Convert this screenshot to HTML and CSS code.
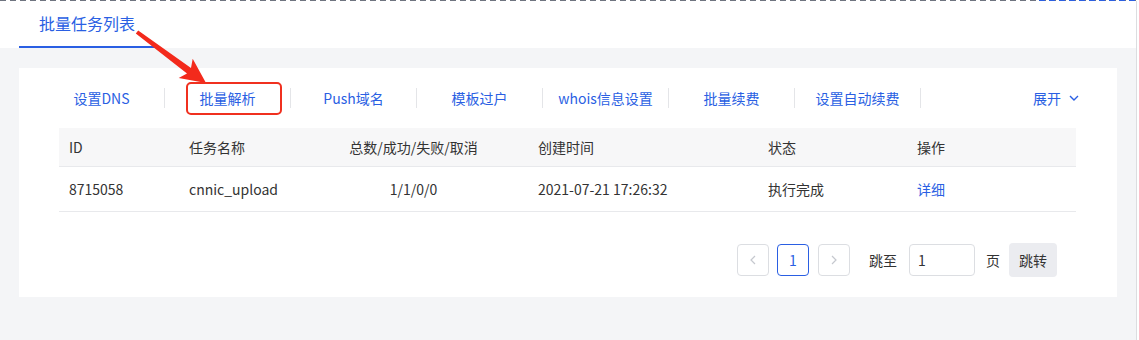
FILE: index.html
```html
<!DOCTYPE html>
<html lang="zh-CN">
<head>
    <meta charset="UTF-8">
    <title>批量任务列表</title>
    <link rel="stylesheet" href="styles.css">
</head>
<body>
    <div class="load-strip"></div>
    <div class="page">
        <div class="tabs">
            <div class="tab active">批量任务列表</div>
        </div>
        <div class="content">
            <div class="panel">
                <div class="toolbar">
                    <div class="actions">
                        <a class="action">设置DNS</a>
                        <a class="action">批量解析</a>
                        <a class="action">Push域名</a>
                        <a class="action">模板过户</a>
                        <a class="action">whois信息设置</a>
                        <a class="action">批量续费</a>
                        <a class="action">设置自动续费</a>
                    </div>
                    <a class="expand">展开
                        <svg width="10" height="6" viewBox="0 0 10 6"><path d="M1 1l4 4 4-4" fill="none" stroke="#2a5fe3" stroke-width="1.4"/></svg>
                    </a>
                </div>

                <table class="task-table">
                    <colgroup>
                        <col style="width:120px">
                        <col style="width:120px">
                        <col style="width:229px">
                        <col style="width:230px">
                        <col style="width:149px">
                        <col style="width:169px">
                    </colgroup>
                    <thead>
                        <tr>
                            <th>ID</th>
                            <th>任务名称</th>
                            <th class="center">总数/成功/失败/取消</th>
                            <th>创建时间</th>
                            <th>状态</th>
                            <th>操作</th>
                        </tr>
                    </thead>
                    <tbody>
                        <tr>
                            <td>8715058</td>
                            <td>cnnic_upload</td>
                            <td class="center">1/1/0/0</td>
                            <td>2021-07-21 17:26:32</td>
                            <td>执行完成</td>
                            <td><a class="link">详细</a></td>
                        </tr>
                    </tbody>
                </table>

                <div class="pager">
                    <span class="page-btn disabled">
                        <svg width="6" height="10" viewBox="0 0 6 10"><path d="M5 1L1 5l4 4" fill="none" stroke="#c5c8ce" stroke-width="1.2"/></svg>
                    </span>
                    <span class="page-btn current">1</span>
                    <span class="page-btn disabled">
                        <svg width="6" height="10" viewBox="0 0 6 10"><path d="M1 1l4 4-4 4" fill="none" stroke="#c5c8ce" stroke-width="1.2"/></svg>
                    </span>
                    <span class="jump-label">跳至</span>
                    <input class="jump-input" type="text" value="1">
                    <span class="jump-unit">页</span>
                    <button class="jump-btn" type="button">跳转</button>
                </div>
            </div>
        </div>

        <!-- annotation drawn over the screenshot -->
        <svg class="note-arrow" width="80" height="60" viewBox="130 28 80 60">
            <polygon points="138.2,30.4 191,67.9 192.7,58.7 206,83 178.7,78.1 187,73.5 135.8,33.6" fill="#f32a1c"/>
        </svg>
        <div class="note-box"></div>
    </div>
</body>
</html>
```

FILE: styles.css
```css
body {
    margin: 0;
    background-color: #fff;
    font-family: "Noto Sans CJK SC", sans-serif;
    font-size: 14px;
    color: #333;
}

.load-strip {
    height: 1px;
    background:
        repeating-linear-gradient(90deg, #2a5fe3 0 6px, transparent 6px 10px) 1039px 0 / 100px 1px no-repeat,
        repeating-linear-gradient(90deg, #6f7480 0 6px, transparent 6px 10px);
}

.page {
    position: relative;
    width: 1136px;
    height: 339px;
    border-right: 1px solid #dcdde0;
    background-color: #f4f5f7;
}

.tabs {
    height: 47px;
    background-color: #fff;
    display: flex;
}

.tab {
    margin-left: 19px;
    padding: 0 20px;
    font-size: 16px;
    line-height: 45px;
    color: #2a5fe3;
    border-bottom: 2px solid transparent;
}

.tab.active {
    border-bottom-color: #2a5fe3;
}

.content {
    padding: 20px 19px 0;
}

.panel {
    background-color: #fff;
    padding: 20px;
    height: 189px;
}

.toolbar {
    display: flex;
    align-items: center;
    justify-content: space-between;
    padding-right: 18px;
}

.actions {
    display: flex;
}

.action {
    width: 125px;
    height: 20px;
    line-height: 20px;
    text-align: center;
    color: #2a5fe3;
    border-right: 1px solid #e4e5e8;
    cursor: pointer;
}

.expand {
    display: flex;
    align-items: center;
    gap: 8px;
    color: #2a5fe3;
    cursor: pointer;
}

.task-table {
    margin: 20px 21px 0 20px;
    width: 1017px;
    border-collapse: collapse;
    table-layout: fixed;
}

.task-table th,
.task-table td {
    text-align: left;
    padding: 0 10px;
    font-weight: normal;
    border-bottom: 1px solid #e8e9ec;
}

.task-table th {
    height: 38px;
    background-color: #f7f7f8;
    color: #333;
}

.task-table td {
    height: 44px;
    color: #333;
}

.task-table .center {
    text-align: center;
}

.link {
    color: #2a5fe3;
    cursor: pointer;
}

.pager {
    display: flex;
    justify-content: flex-end;
    align-items: center;
    margin-top: 31px;
    padding-right: 40px;
}

.page-btn {
    box-sizing: border-box;
    width: 32px;
    height: 32px;
    border: 1px solid #dcdee2;
    border-radius: 4px;
    display: flex;
    align-items: center;
    justify-content: center;
    margin-right: 8px;
}

.page-btn.current {
    border-color: #2a5fe3;
    color: #2a5fe3;
    margin-right: 9px;
}

.jump-label {
    margin-left: 11px;
    margin-right: 12px;
}

.jump-input {
    box-sizing: border-box;
    width: 66px;
    height: 32px;
    border: 1px solid #dcdee2;
    border-radius: 4px;
    padding: 0 8px;
    font-family: inherit;
    font-size: 14px;
    color: #333;
    outline: none;
}

.jump-unit {
    margin-left: 11px;
    margin-right: 9px;
}

.jump-btn {
    width: 48px;
    height: 34px;
    border: none;
    border-radius: 4px;
    background-color: #ebecf0;
    font-family: inherit;
    font-size: 14px;
    color: #333;
    padding: 0;
}

.note-arrow {
    position: absolute;
    left: 130px;
    top: 27px;
}

.note-box {
    position: absolute;
    left: 186px;
    top: 81px;
    width: 92px;
    height: 29px;
    border: 2px solid #f0301f;
    border-radius: 5px;
}
```
